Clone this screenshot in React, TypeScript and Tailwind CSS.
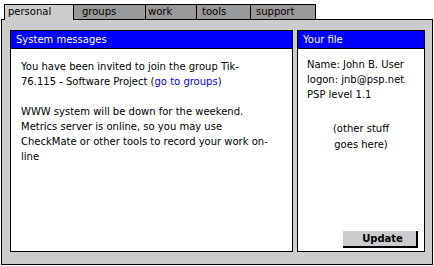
const tabs = [
  { label: "personal", w: "w-[69px] pl-[3px]", active: true },
  { label: "groups", w: "w-[72px] pl-[8px]", active: false },
  { label: "work", w: "w-[51px] pl-[2px]", active: false },
  { label: "tools", w: "w-[54px] pl-[5px]", active: false },
  { label: "support", w: "w-[66px] pl-[5px] border-r", active: false },
]

export default function App() {
  return (
    <div className="w-[434px] h-[266px] bg-white text-black text-[10px] font-['DejaVu_Sans',sans-serif]">
      {/* tab strip */}
      <div className="relative z-10 flex items-start h-[15px] mt-[4px] pl-[4px]">
        {tabs.map((t) => (
          <div
            key={t.label}
            className={
              t.active
                ? `${t.w} h-[16px] border-t border-l border-black bg-[#cccccc] leading-[14px]`
                : `${t.w} h-[15px] border-t border-l border-black bg-[#999999] leading-[14px]`
            }
          >
            {t.label}
          </div>
        ))}
      </div>

      {/* panel */}
      <div className="ml-[1px] w-[432px] h-[246px] border border-black bg-[#cccccc] flex gap-[4px] pl-[8px] pt-[10px]">
        <div className="w-[283px] h-[222px] border border-black bg-white flex flex-col">
          <div className="h-[18px] border-b border-black bg-[#0000ff] text-white leading-[17px] pl-[5px]">
            System messages
          </div>
          <div className="w-[261px] pl-[10px] pt-[10px] leading-[15px]">
            <p>
              You have been invited to join the group Tik-76.115 - Software Project (
              <span className="text-[#0000ff]">go to groups</span>)
            </p>
            <p className="mt-[15px]">
              WWW system will be down for the weekend. Metrics server is online, so you may use
              CheckMate or other tools to record your work on-line
            </p>
          </div>
        </div>

        <div className="w-[128px] h-[222px] border border-black bg-white flex flex-col">
          <div className="h-[18px] border-b border-black bg-[#0000ff] text-white leading-[17px] pl-[5px]">
            Your file
          </div>
          <div className="pl-[9px] pt-[8px] leading-[15px]">
            <p>Name: John B. User</p>
            <p>logon: jnb@psp.net</p>
            <p>PSP level 1.1</p>
            <p className="mt-[19px] text-center pr-[9px] leading-[16px]">
              (other stuff
              <br />
              goes here)
            </p>
          </div>
          <button className="mt-auto self-end mr-[6px] mb-[3px] w-[75px] h-[17px] bg-[#cccccc] border-r-2 border-b-2 border-black font-bold text-[10px] leading-[15px] pl-[6px]">
            Update
          </button>
        </div>
      </div>
    </div>
  )
}
